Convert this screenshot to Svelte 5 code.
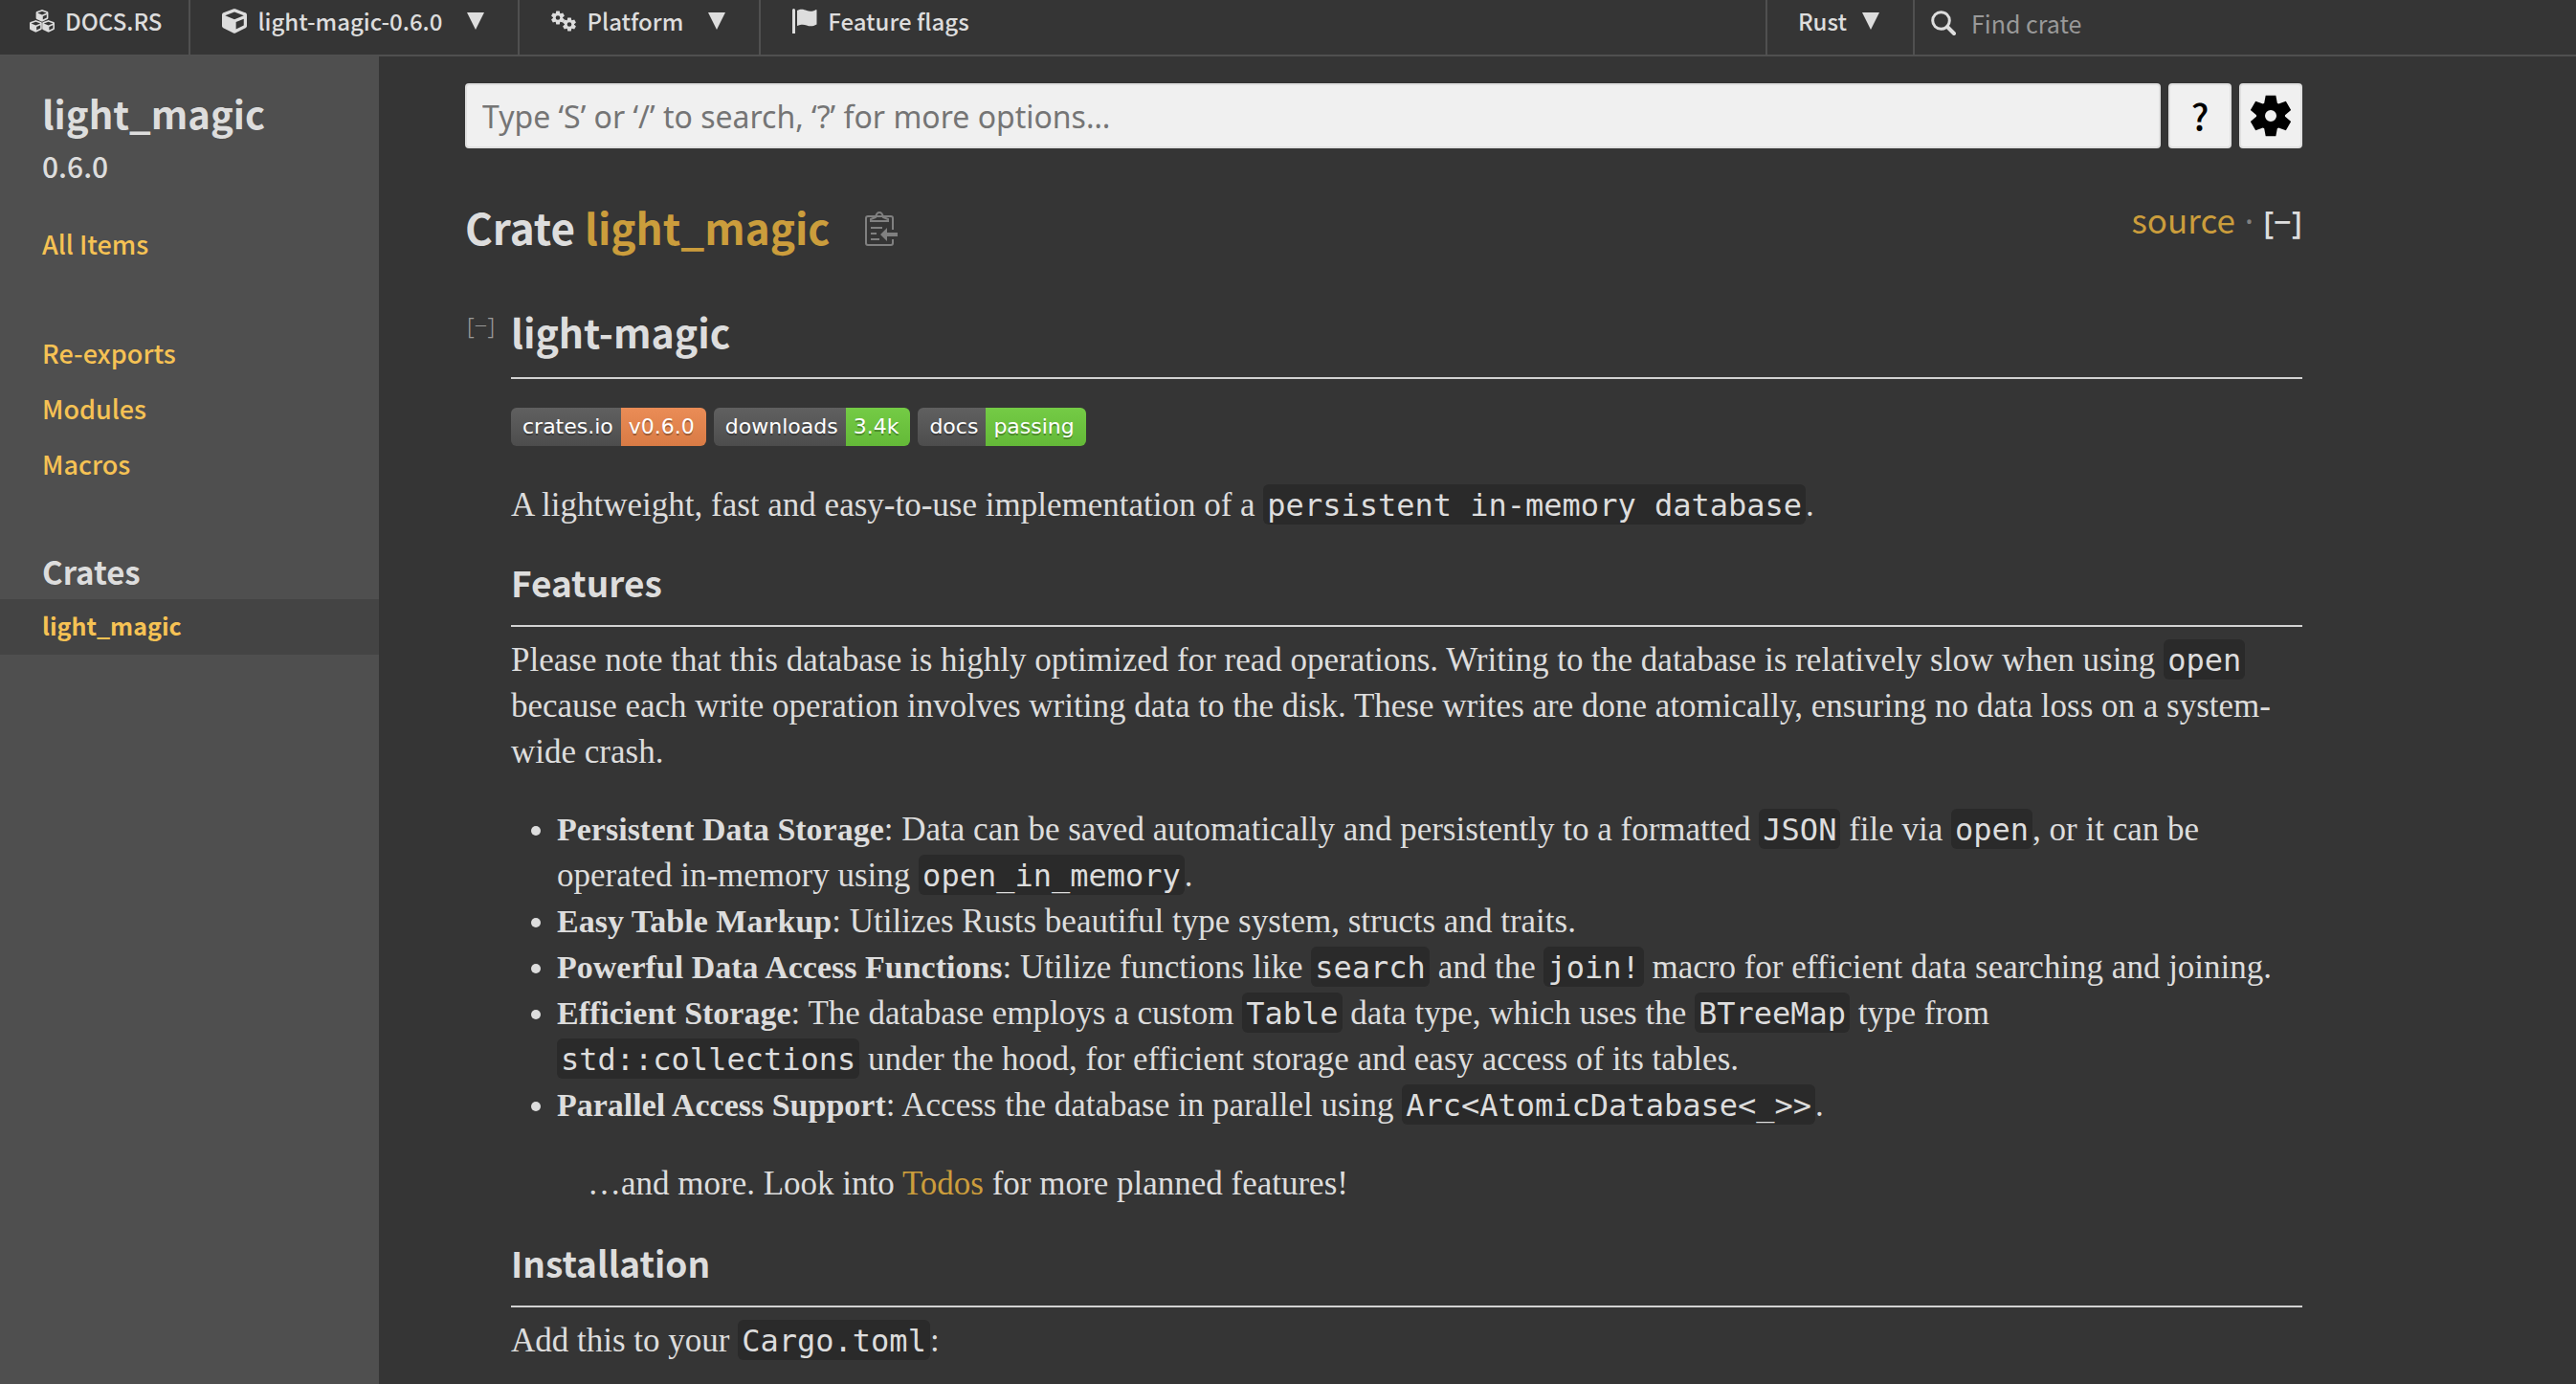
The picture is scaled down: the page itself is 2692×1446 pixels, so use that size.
<script>
  const sidebarLinks = ['Re-exports', 'Modules', 'Macros'];
  const badges = [
    { label: 'crates.io', value: 'v0.6.0', tone: 'orange' },
    { label: 'downloads', value: '3.4k', tone: 'green' },
    { label: 'docs', value: 'passing', tone: 'green' },
  ];

  const cubePath =
    'M239.1 6.3l-208 78c-18.7 7-31.1 25-31.1 45v225.1c0 18.2 10.3 34.8 26.5 42.9l208 104c13.5 6.8 29.4 6.8 42.9 0l208-104c16.3-8.1 26.5-24.8 26.5-42.9V129.3c0-20-12.4-37.9-31.1-44.9l-208-78C262 2.2 250 2.2 239.1 6.3zM256 68.4l192 72v1.1l-192 78-192-78v-1.1l192-72zm32 356V275.5l160-65v133.9l-160 80z';

  function gearPath(cx, cy, outer, inner, hole) {
    const points = [];
    for (let k = 0; k < 6; k++) {
      for (const [offset, radius] of [[-27, inner], [-14, outer], [14, outer], [27, inner]]) {
        const a = ((k * 60 + offset - 90) * Math.PI) / 180;
        points.push(`${(cx + radius * Math.cos(a)).toFixed(2)} ${(cy + radius * Math.sin(a)).toFixed(2)}`);
      }
    }
    const ring = `M${cx - hole} ${cy}a${hole} ${hole} 0 1 0 ${hole * 2} 0a${hole} ${hole} 0 1 0 ${-hole * 2} 0z`;
    return `M${points.join('L')}z${ring}`;
  }
</script>

<div class="page">
  <nav class="topbar" aria-label="docs.rs">
    <a class="cell first" href="#docs">
      <svg class="icon" viewBox="0 0 26 24" aria-hidden="true">
        <path transform="translate(6.6 0) scale(.025)" d={cubePath} />
        <path transform="translate(0 11) scale(.025)" d={cubePath} />
        <path transform="translate(13.2 11) scale(.025)" d={cubePath} />
      </svg>
      <span>DOCS.RS</span>
    </a>
    <button class="cell">
      <svg class="icon" viewBox="0 0 512 512" aria-hidden="true"><path d={cubePath} /></svg>
      <span>light-magic-0.6.0</span>
      <svg class="caret" viewBox="0 0 18 18" aria-hidden="true"><path d="M0 0h18L9 18z" /></svg>
    </button>
    <button class="cell">
      <svg class="icon" viewBox="0 0 26 24" aria-hidden="true">
        <path fill-rule="evenodd" d={gearPath(7, 8.5, 7.2, 5, 2.3)} />
        <path fill-rule="evenodd" d={gearPath(19, 15.5, 7.2, 5, 2.3)} />
      </svg>
      <span>Platform</span>
      <svg class="caret" viewBox="0 0 18 18" aria-hidden="true"><path d="M0 0h18L9 18z" /></svg>
    </button>
    <a class="cell last" href="#features">
      <svg class="icon" viewBox="0 0 26 26" aria-hidden="true">
        <path d="M0 1.5a1.5 1.5 0 0 1 3 0V26H0zM5 2c4-2.2 7-1.2 10 0s6 1.2 9.5-.8q1-.4 1 .6v14.700c-4 2.400-7.500 2.200-10.500 1s-6-1.200-10 .5z" />
      </svg>
      <span>Feature flags</span>
    </a>
    <button class="cell rust">
      <span>Rust</span>
      <svg class="caret" viewBox="0 0 18 18" aria-hidden="true"><path d="M0 0h18L9 18z" /></svg>
    </button>
    <label class="find">
      <svg class="icon" viewBox="0 0 26 26" aria-hidden="true">
        <circle cx="10.5" cy="10.5" r="8.8" fill="none" stroke="currentColor" stroke-width="3" />
        <path d="M17 17l7 7" fill="none" stroke="currentColor" stroke-width="4" stroke-linecap="round" />
      </svg>
      <input type="text" placeholder="Find crate" aria-label="Find crate" />
    </label>
  </nav>

  <div class="body">
    <aside class="sidebar">
      <h2 class="crate">light_magic</h2>
      <div class="version">0.6.0</div>
      <a class="link" href="#all">All Items</a>
      <div class="group">
        {#each sidebarLinks as name}
          <a class="link" href="#{name.toLowerCase()}">{name}</a>
        {/each}
      </div>
      <h3 class="crates">Crates</h3>
      <a class="link current" href="#crate">light_magic</a>
    </aside>

    <main>
      <div class="content">
        <form class="search">
          <input type="search" aria-label="Search" placeholder="Type ‘S’ or ‘/’ to search, ‘?’ for more options…" />
          <button type="button" class="help" aria-label="Help">?</button>
          <button type="button" aria-label="Settings">
            <svg class="gear" viewBox="0 0 44 44" aria-hidden="true">
              <path fill-rule="evenodd" d={gearPath(22, 22, 22, 15, 6)} />
            </svg>
          </button>
        </form>

        <header class="heading">
          <h1>Crate <a href="#crate">light_magic</a></h1>
          <button class="copy" aria-label="Copy item path">
            <svg viewBox="0 0 34 36" aria-hidden="true">
              <path class="line" d="M29 19V7a2 2 0 0 0-2-2H3a2 2 0 0 0-2 2v26a2 2 0 0 0 2 2h24a2 2 0 0 0 2-2v-4" />
              <path class="line" d="M6 10V8l5-2q1-5 4-5t4 5l5 2v2z" />
              <path class="line" d="M6 17h12M6 23h6M6 29h9" />
              <path d="M16 24l7-7v5h11v4H23v5z" />
            </svg>
          </button>
          <div class="out">
            <a href="#source">source</a>
            <span class="dot">·</span>
            <button class="toggle">[−]</button>
          </div>
        </header>

        <section class="doc">
          <button class="toggle small">[−]</button>
          <div class="text">
            <h2>light-magic</h2>
            <div class="badges">
              {#each badges as b}
                <a class="badge" href="#{b.label}"><span>{b.label}</span><span class={b.tone}>{b.value}</span></a>
              {/each}
            </div>
            <p>A lightweight, fast and easy-to-use implementation of a <code>persistent in-memory database</code>.</p>

            <h3>Features</h3>
            <p>
              Please note that this database is highly optimized for read operations. Writing to the database is
              relatively slow when using <code>open</code> because each write operation involves writing data to the
              disk. These writes are done atomically, ensuring no data loss on a system-wide crash.
            </p>
            <ul>
              <li><strong>Persistent Data Storage</strong>: Data can be saved automatically and persistently to a formatted <code>JSON</code> file via <code>open</code>, or it can be operated in-memory using <code>open_in_memory</code>.</li>
              <li><strong>Easy Table Markup</strong>: Utilizes Rusts beautiful type system, structs and traits.</li>
              <li><strong>Powerful Data Access Functions</strong>: Utilize functions like <code>search</code> and the <code>join!</code> macro for efficient data searching and joining.</li>
              <li><strong>Efficient Storage</strong>: The database employs a custom <code>Table</code> data type, which uses the <code>BTreeMap</code> type from<br /><code>std::collections</code> under the hood, for efficient storage and easy access of its tables.</li>
              <li><strong>Parallel Access Support</strong>: Access the database in parallel using <code>Arc&lt;AtomicDatabase&lt;_&gt;&gt;</code>.</li>
            </ul>
            <blockquote>…and more. Look into <a href="#todos">Todos</a> for more planned features!</blockquote>

            <h3>Installation</h3>
            <p>Add this to your <code>Cargo.toml</code>:</p>
          </div>
        </section>
      </div>
    </main>
  </div>
</div>

<style>
  :global(html) { height: 100%; }
  :global(body) { background: #353535; height: 100%; overflow: hidden; }

  .page {
    --sans: 'Noto Sans CJK SC', 'Noto Sans', sans-serif;
    display: flex;
    flex-direction: column;
    height: 100vh;
    color: #ddd;
    font-family: var(--sans);
  }
  a { color: #cb9d3c; text-decoration: none; }
  h1, h2, h3, p, ul, blockquote { margin: 0; padding: 0; }
  button { border: 0; padding: 0; background: none; color: inherit; font-family: inherit; cursor: pointer; }
  svg { display: block; flex: none; fill: currentColor; }

  .topbar { display: flex; flex: none; height: 57px; border-bottom: 2px solid #505050; line-height: 36px; }
  .cell { display: flex; align-items: center; gap: 11px; padding: 0 35px 14px 33px; border-right: 2px solid #505050; color: #ddd; font-size: 24px; font-weight: 500; }
  .first { padding-left: 31px; padding-right: 28px; }
  .last { border-right: 0; }
  .rust { margin-left: auto; padding-left: 32px; gap: 16px; border-left: 2px solid #505050; }
  .icon { width: 26px; height: 26px; }
  .caret { width: 18px; height: 18px; margin-left: 15px; }
  .rust .caret { margin-left: 0; }
  .find { display: flex; align-items: center; gap: 16px; width: 674px; padding: 0 0 10px 17px; }
  .find input { flex: 1; min-width: 0; padding: 0; border: 0; outline: 0; background: none; color: #ddd; font: 25px/36px var(--sans); }
  .find input::placeholder { color: #999; opacity: 1; }

  .body { display: flex; flex: 1; min-height: 0; }
  .sidebar { flex: none; width: 396px; background: #4f4f4f; }
  .crate { padding: 34px 44px 0; font-size: 40px; line-height: 50px; font-weight: 700; }
  .version { padding: 10px 44px 35px; font-size: 30px; line-height: 40px; font-weight: 500; }
  .link { display: block; padding: 10px 44px 14px; font-size: 27px; line-height: 34px; font-weight: 500; color: #f6c254; }
  .group { padding: 56px 0 55px; }
  .crates { padding: 4px 44px 7px; font-size: 33px; line-height: 44px; font-weight: 700; }
  .current { background: #444; font-size: 25px; font-weight: 700; }

  main { flex: 1; min-width: 0; padding: 28px 90px 0; overflow: hidden; }
  .content { max-width: 1920px; }
  .search { display: flex; gap: 8px; height: 68px; }
  .search input { flex: 1; min-width: 0; box-sizing: border-box; padding: 0 16px; border: 2px solid #e0e0e0; border-radius: 4px; background: #f0f0f0; color: #111; font: 32px 'Noto Sans', sans-serif; }
  .search input::placeholder { color: #757575; opacity: 1; }
  .search button { display: flex; align-items: center; justify-content: center; width: 66px; border: 2px solid #e0e0e0; border-radius: 4px; background: #f0f0f0; color: #000; }
  .search .help { font-size: 38px; line-height: 48px; font-weight: 500; }
  .gear { width: 44px; height: 44px; }

  .heading { display: flex; align-items: flex-start; margin-top: 54px; }
  h1 { font-size: 44px; line-height: 56px; font-weight: 700; }
  .copy { margin: 12px 0 0 37px; color: #808080; }
  .copy svg { width: 34px; height: 36px; }
  .line { fill: none; stroke: currentColor; stroke-width: 2; }
  .out { display: flex; align-items: baseline; gap: 10px; margin-left: auto; font-size: 35px; line-height: 40px; }
  .dot { color: #808080; font-family: 'Noto Sans', sans-serif; }
  .toggle { color: #ddd; font: 500 33px/40px 'Noto Sans', sans-serif; }

  .doc { display: flex; margin-top: 55px; }
  .small { align-self: flex-start; box-sizing: border-box; width: 48px; padding-left: 2px; text-align: left; color: #999; font-size: 24px; font-weight: 300; }
  .text { flex: 1; min-width: 0; font: 35px/48px 'Liberation Serif', serif; }
  .text h2, .text h3 { font-family: var(--sans); font-weight: 700; border-bottom: 2px solid #d2d2d2; }
  .text h2 { padding-bottom: 22px; font-size: 41px; line-height: 52px; }
  .text h3 { padding-bottom: 21px; font-size: 37px; line-height: 48px; margin-top: 32px; margin-bottom: 11px; }
  .badges { display: flex; gap: 8px; margin: 30px 0 38px; }
  .badge { display: flex; border-radius: 6px; overflow: hidden; color: #fff; font: 22px/40px 'DejaVu Sans', sans-serif; text-shadow: 0 2px 0 rgba(1, 1, 1, 0.3); }
  .badge span { padding: 0 8px 0 12px; background: linear-gradient(#606060, #4d4d4d); }
  .badge .orange { padding: 0 12px 0 8px; background: linear-gradient(#ea8c56, #d97b45); }
  .badge .green { padding: 0 12px 0 8px; background: linear-gradient(#74cb45, #64b938); }
  code { padding: 3px 4px 1px; border-radius: 6px; background: #2a2a2a; font: 32px/32px 'DejaVu Sans Mono', monospace; }
  ul { margin-top: 33px; padding-left: 48px; }
  strong { font-size: 34px; line-height: 40px; }
  blockquote { margin: 34px 0 34px 80px; }
</style>
